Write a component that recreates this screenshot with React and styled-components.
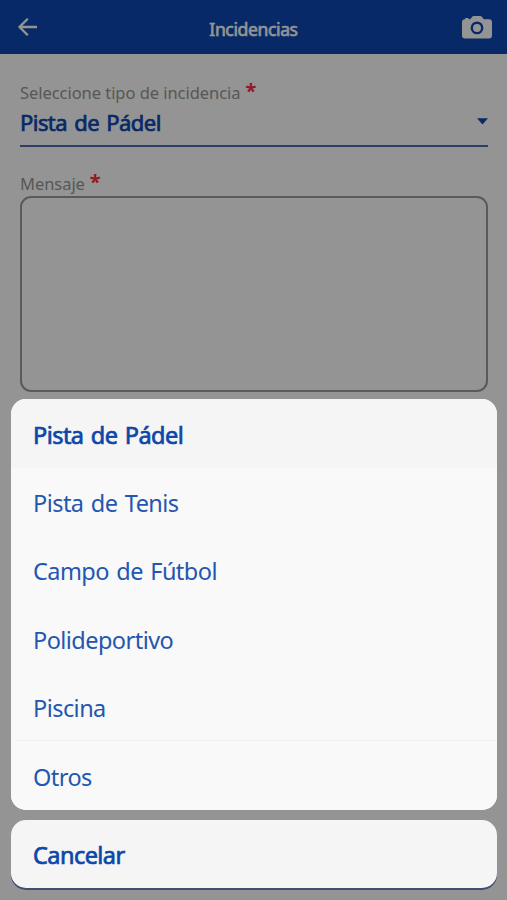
import React, { useState } from "react";
import styled, { createGlobalStyle, css } from "styled-components";

const GlobalStyle = createGlobalStyle`
  * {
    box-sizing: border-box;
  }
  body {
    margin: 0;
    font-family: "Noto Sans", "Open Sans", sans-serif;
    background-color: white;
  }
  button {
    font-family: inherit;
  }
  svg {
    flex-shrink: 0;
  }
`;

const Screen = styled.div`
  position: relative;
  display: flex;
  flex-direction: column;
  width: 100%;
  height: 900px;
  overflow: hidden;
  background-color: white;
`;

const Header = styled.header`
  display: grid;
  grid-template-columns: 60px 1fr 60px;
  align-items: center;
  height: 54px;
  background-color: #0d47b1;
`;

const HeaderButton = styled.button`
  display: flex;
  justify-content: ${(props) => props.align || "flex-start"};
  padding: 0 15px 0 17px;
  border: none;
  background: none;
  color: white;
`;

const strokeBold = css`
  -webkit-text-stroke: ${(props) => props.stroke || "0.7px"} currentColor;
`;

const Title = styled.h1`
  margin: 3px 0 0;
  text-align: center;
  color: white;
  font-size: 17.6px;
  font-weight: 400;
  line-height: 24px;
  letter-spacing: -0.4px;
  ${strokeBold}
`;

const Form = styled.main`
  display: flex;
  flex: 1;
  flex-direction: column;
  padding: 28px 19px 10px 20px;
`;

const Label = styled.label`
  display: flex;
  gap: 5px;
  height: 22px;
  color: #969696;
  font-size: 16.5px;
  line-height: 22px;
  letter-spacing: -0.05px;
`;

const Required = styled.span`
  margin-top: -2px;
  color: #ff2a45;
  font-size: 20px;
  font-weight: 700;
`;

const Select = styled.div`
  display: flex;
  align-items: center;
  justify-content: space-between;
  height: 43px;
  margin-bottom: 26px;
  padding: 0 0 6px;
  border-bottom: 2px solid #4a6cb5;
  color: #0d47b1;
  font-size: 22px;
  line-height: 30px;
  letter-spacing: -0.55px;
  word-spacing: 2px;
  ${strokeBold}
`;

const Message = styled.textarea`
  display: block;
  width: 100%;
  height: 196px;
  margin: 1px 0 0;
  resize: none;
  border: 2px solid #9c9c9c;
  border-radius: 11px;
  background: none;
`;

const SendButton = styled.button`
  height: 68px;
  margin: auto -9px 0 -9px;
  border: none;
  border-radius: 15px;
  background-color: #6c88c6;
`;

const Backdrop = styled.div`
  position: absolute;
  inset: 0;
  display: flex;
  flex-direction: column;
  justify-content: flex-end;
  gap: 9.8px;
  padding: 0 10px 12px 11px;
  background-color: rgba(0, 0, 0, 0.42);
`;

const Sheet = styled.div`
  overflow: hidden;
  border-radius: 15px;
  background-color: #f9f9f9;
`;

const Option = styled.button`
  display: block;
  width: 100%;
  height: 68.4px;
  padding: 2px 22px 0;
  border: none;
  background-color: ${(props) => (props.selected ? "#f5f5f5" : "#f9f9f9")};
  color: ${(props) => (props.selected ? "#0d47a8" : "#2456b0")};
  font-size: 23.5px;
  line-height: 32px;
  letter-spacing: -0.55px;
  word-spacing: 1.8px;
  text-align: left;
  ${(props) => props.selected && strokeBold}
`;

const Divider = styled.hr`
  height: 1px;
  margin: -1px 1px 0 5px;
  border: none;
  background-color: #efefef;
`;

const options = [
  "Pista de Pádel",
  "Pista de Tenis",
  "Campo de Fútbol",
  "Polideportivo",
  "Piscina",
  "Otros",
];

const BackIcon = () => (
  <svg width="21" height="20" viewBox="0 0 21 20" fill="none">
    <path
      d="M20 10H3M10.800 1.700L2.500 10l8.300 8.300"
      stroke="currentColor"
      strokeWidth="2.3"
    />
  </svg>
);

const CameraIcon = () => (
  <svg width="30" height="23" viewBox="0 0 30 23">
    <path
      fill="currentColor"
      fillRule="evenodd"
      d="M3 3.2c0-.8.4-1.2 1-1.2h1.8c.6 0 1 .4 1 1.2h1.4L10 1.1C10.5.4 11 0 12 0h6c1 0 1.500.4 2 1.100L21.800 3.200H27a3 3 0 0 1 3 3V19.500a3 3 0 0 1-3 3H3a3 3 0 0 1-3-3V6.200a3 3 0 0 1 3-3ZM15 5.500a6.400 6.400 0 1 0 0 12.800A6.400 6.400 0 0 0 15 5.500Zm0 2.400a4 4 0 1 1 0 8 4 4 0 0 1 0-8Z"
    />
  </svg>
);

const CaretIcon = () => (
  <svg width="11" height="7" viewBox="0 0 11 7">
    <path d="M0 0.300h11L5.500 6.500Z" fill="currentColor" />
  </svg>
);

export default function App() {
  const [selected, setSelected] = useState(options[0]);
  const [open, setOpen] = useState(true);

  return (
    <Screen>
      <GlobalStyle />
      <Header>
        <HeaderButton>
          <BackIcon />
        </HeaderButton>
        <Title stroke="0.6px">Incidencias</Title>
        <HeaderButton align="flex-end">
          <CameraIcon />
        </HeaderButton>
      </Header>
      <Form>
        <Label>
          Seleccione tipo de incidencia <Required>*</Required>
        </Label>
        <Select onClick={() => setOpen(true)}>
          {selected}
          <CaretIcon />
        </Select>
        <Label htmlFor="message">
          Mensaje <Required>*</Required>
        </Label>
        <Message id="message" />
        <SendButton />
      </Form>
      {open && (
        <Backdrop>
          <Sheet>
            {options.map((option, index) => (
              <React.Fragment key={option}>
                <Option
                  selected={option === selected}
                  onClick={() => {
                    setSelected(option);
                    setOpen(false);
                  }}
                >
                  {option}
                </Option>
                {index === options.length - 2 && <Divider />}
              </React.Fragment>
            ))}
          </Sheet>
          <Sheet>
            <Option selected onClick={() => setOpen(false)}>
              Cancelar
            </Option>
          </Sheet>
        </Backdrop>
      )}
    </Screen>
  );
}
